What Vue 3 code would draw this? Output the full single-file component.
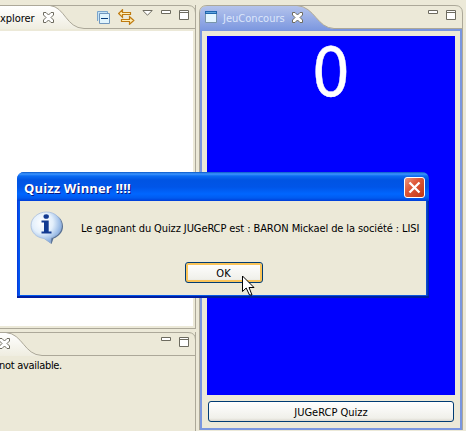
<script setup>
const message = 'Le gagnant du Quizz JUGeRCP est : BARON Mickael de la société : LISI'
</script>

<template>
  <div class="workbench">
    <div class="column left">
      <section class="view explorer">
        <header class="head">
          <svg class="shape" width="196" height="24" viewBox="0 0 196 24">
            <defs>
              <linearGradient id="tabLight" x1="0" y1="0" x2="0" y2="1">
                <stop offset="0" stop-color="#fff" />
                <stop offset="1" stop-color="#efede0" />
              </linearGradient>
            </defs>
            <path d="M0 1H50C65 2 66 23 84 23.5V24H0Z" fill="url(#tabLight)" />
            <path d="M0 .5H188Q195.5 .5 195.5 8V24" class="line" />
            <path d="M50 .5C65 2 66 23 84 23.5H195" class="line" />
          </svg>
          <div class="bar">
            <span class="label explorer-label">xplorer</span>
            <svg class="x-icon" width="11" height="11" viewBox="0 0 11 11"><path d="M.5 .5h2.5l2.5 2.5 2.5-2.5h2.5v2.5l-2.5 2.5 2.5 2.5v2.5h-2.5l-2.5-2.5-2.5 2.5h-2.5v-2.5l2.5-2.5-2.5-2.5z" fill="#fff" stroke="#6d6b5f" /></svg>
            <svg class="collapse" width="13" height="13" viewBox="0 0 13 13"><path d="M.5 10V.5H10.5V2" fill="#c4e3f6" stroke="#7aa5cc" /><path d="M2.5 2.5h10v10h-10z" fill="#e0f4fd" stroke="#7096bd" /><path d="M4 7h7v1h-7z" fill="#083d7c" /></svg>
            <svg class="arrows" width="17" height="16" viewBox="0 0 17 16"><path d="M.7 4.500 4.500 .7V3.500H12.500V5.500H4.500V8.300zM15.800 11.500 11.500 7.700V10.500H3.500V12.500H11.500V15.300z" fill="#ffefb8" stroke="#c07b10" stroke-width="1.200" /></svg>
            <svg class="tri" width="11" height="6" viewBox="0 0 11 6"><path d="M.8 .5h9.400L5.500 5.200z" fill="#fff" stroke="#6d6b5f" /></svg>
            <svg class="min" width="10" height="4" viewBox="0 0 10 4"><path d="M.5 .5h9v3h-9z" fill="#fff" stroke="#6d6b5f" /></svg>
            <svg class="max" width="10" height="10" viewBox="0 0 10 10"><path d="M.5 .5h9v9h-9zM.5 2.500h9" fill="#fff" stroke="#6d6b5f" /></svg>
          </div>
        </header>
        <div class="tree"></div>
      </section>

      <section class="view outline">
        <header class="head">
          <svg class="shape" width="196" height="24" viewBox="0 0 196 24">
            <path d="M0 1H6C23 2 24 23 42 23.500V24H0Z" fill="url(#tabLight)" />
            <path d="M0 .5H188Q195.500 .5 195.500 8V24" class="line" />
            <path d="M6 .5C23 2 24 23 42 23.500H195" class="line" />
          </svg>
          <div class="bar">
            <svg class="x-icon low" width="11" height="11" viewBox="0 0 11 11"><path d="M.5 .5h2.500l2.500 2.500 2.500-2.500h2.500v2.500l-2.500 2.500 2.500 2.500v2.500h-2.500l-2.500-2.500-2.500 2.500h-2.500v-2.500l2.500-2.500-2.500-2.500z" fill="#fff" stroke="#6d6b5f" /></svg>
            <svg class="min" width="10" height="4" viewBox="0 0 10 4"><path d="M.5 .5h9v3h-9z" fill="#fff" stroke="#6d6b5f" /></svg>
            <svg class="max" width="10" height="10" viewBox="0 0 10 10"><path d="M.5 .5h9v9h-9zM.5 2.500h9" fill="#fff" stroke="#6d6b5f" /></svg>
          </div>
        </header>
        <p class="label unavailable">not available.</p>
      </section>
    </div>

    <section class="contest">
      <header class="head">
        <svg class="shape" width="264" height="26" viewBox="0 0 264 26">
          <defs>
            <linearGradient id="tabBlue" x1="0" y1="0" x2="0" y2="1">
              <stop offset="0" stop-color="#b4c3ec" />
              <stop offset="1" stop-color="#7a96df" />
            </linearGradient>
          </defs>
          <path d="M1 26V8Q1 1 8 1H98C116 2 118 23 135 23.500V26Z" fill="url(#tabBlue)" />
          <path d="M134 24H263V26H134Z" fill="#7a96df" />
          <path d="M.5 26V8Q.5 .5 8 .5H256Q263.500 .5 263.500 8V26" class="line" />
          <path d="M98 .5C116 2 118 23 135 23.500H263" class="line" />
        </svg>
        <div class="bar">
          <svg class="window" width="12" height="12" viewBox="0 0 12 12"><path d="M.5 .5h11v11H.5z" fill="#e4f6ff" stroke="#7895aa" /><path d="M0 0h12v3H0z" fill="#1f67ae" /><path d="M1 1h10v1H1z" fill="#61a5dc" /></svg>
          <span class="label contest-label">JeuConcours</span>
          <svg class="x-icon bright" width="11" height="11" viewBox="0 0 11 11"><path d="M.5 .5h2.500l2.500 2.500 2.500-2.500h2.500v2.500l-2.500 2.500 2.500 2.500v2.500h-2.500l-2.500-2.500-2.500 2.500h-2.500v-2.500l2.500-2.500-2.500-2.500z" fill="#fff" stroke="#6d6b5f" /></svg>
          <svg class="min" width="10" height="4" viewBox="0 0 10 4"><path d="M.5 .5h9v3h-9z" fill="#fff" stroke="#6d6b5f" /></svg>
          <svg class="max" width="10" height="10" viewBox="0 0 10 10"><path d="M.5 .5h9v9h-9zM.5 2.500h9" fill="#fff" stroke="#6d6b5f" /></svg>
        </div>
      </header>
      <div class="contest-frame">
        <div class="contest-body">
          <div class="score"><span>0</span></div>
          <button class="xp-button quiz"><span class="label quiz-label">JUGeRCP Quizz</span></button>
        </div>
      </div>
    </section>

    <div class="dialog">
      <div class="title">
        <span class="title-text">Quizz Winner !!!!</span>
        <button class="close">
          <svg width="21" height="21" viewBox="0 0 21 21">
            <defs>
              <linearGradient id="red" x1="0" y1="0" x2="1" y2="1">
                <stop offset="0" stop-color="#eb9a83" />
                <stop offset=".4" stop-color="#df593a" />
                <stop offset="1" stop-color="#bd3512" />
              </linearGradient>
            </defs>
            <rect x=".5" y=".5" width="20" height="20" rx="2.500" fill="url(#red)" stroke="#fff" />
            <path d="M5.500 5.500l10 10M15.500 5.500l-10 10" stroke="#fff" stroke-width="2.300" />
          </svg>
        </button>
      </div>
      <div class="dialog-body">
        <div class="message">
          <svg width="34" height="34" viewBox="0 0 34 34">
            <defs>
              <radialGradient id="bubble" cx=".38" cy=".35" r=".68">
                <stop offset="0" stop-color="#fff" />
                <stop offset=".5" stop-color="#e3effb" />
                <stop offset="1" stop-color="#7ba5dd" />
              </radialGradient>
            </defs>
            <path d="M18 2.500C27 2.500 33 8 33 15.500 33 21 29 25.500 23.500 27.500L21.500 33 15 28Z" fill="#3c5a88" opacity=".85" />
            <path d="M16.500 1C25 1 31.500 7 31.500 14.500 31.500 21 27 25 21 27L20.500 32 14 27.500C6 26.500 1 21 1 14.500 1 7 8 1 16.500 1Z" fill="url(#bubble)" stroke="#a0b8da" stroke-width=".7" />
            <ellipse cx="16.200" cy="5.500" rx="2.700" ry="2.300" fill="#123a91" />
            <path d="M11.500 9.500h7.200V20.500h2.800v2H11.500v-2H14v-9h-2.500z" fill="#123a91" />
          </svg>
          <span class="label message-label">{{ message }}</span>
        </div>
        <button class="xp-button ok"><span class="label ok-label">OK</span></button>
      </div>
      <svg class="cursor" width="13" height="21" viewBox="0 0 13 21"><path d="M.5 1v15.500L4.200 13l3.300 7h2.500l-3-7.500h5z" fill="#fff" stroke="#000" /></svg>
    </div>
  </div>
</template>

<style>
body { margin: 0; overflow: hidden; }
</style>

<style scoped>
* { box-sizing: border-box; }
svg { display: block; flex: none; }
button { padding: 0; margin: 0; border: 0; background: none; }
.workbench {
  position: relative;
  display: flex;
  gap: 3px;
  width: 466px;
  height: 431px;
  padding-top: 5px;
  overflow: hidden;
  background: #ece9d8;
  color: #000;
  font-family: "DejaVu Sans Condensed", "DejaVu Sans", sans-serif;
  font-stretch: condensed;
  font-size: 11px;
}
.label { display: block; padding-top: 1px; line-height: 14px; white-space: nowrap; }
.line { fill: none; stroke: #aca899; }
.column { display: flex; flex-direction: column; gap: 3px; width: 196px; }
.view { border-right: 1px solid #aca899; }
.explorer { display: flex; flex-direction: column; height: 324px; border-bottom: 1px solid #aca899; }
.outline { flex: 1; }
.head { display: grid; height: 24px; }
.shape, .bar { grid-area: 1 / 1; }
.bar { display: flex; align-items: flex-start; width: 196px; padding-right: 7px; }
.contest .bar { width: 264px; padding: 0 7px 0 6px; }
.explorer-label { width: 43px; margin-top: 6px; letter-spacing: -.05px; }
.x-icon { margin-top: 7px; }
.low { margin-left: -1px; margin-top: 6px; }
.collapse { margin: 6px 0 0 43px; }
.arrows { margin: 4px 0 0 8px; }
.tri { margin: 5px 0 0 7px; }
.min { margin: 5px 8px 0 auto; }
.max { margin-top: 5px; }
.tree { flex: 1; margin: 2px 2px 2px 0; background: #fff; }
.unavailable { margin: 2px 0 0 -1px; letter-spacing: -.3px; }
.contest { display: flex; flex-direction: column; width: 264px; height: 425px; }
.contest .head { height: 26px; }
.window { margin-top: 6px; }
.contest-label { width: 70px; margin: 6px 0 0 6px; color: #dce6fa; letter-spacing: .02px; }
.bright { margin: 7px 0 0 -1px; }
.contest-frame {
  display: flex;
  flex: 1;
  border: solid #aca899;
  border-width: 0 1px;
}
.contest-body {
  display: flex;
  flex-direction: column;
  gap: 6px;
  flex: 1;
  padding: 5px 5px 6px;
  border: solid #7a96df;
  border-width: 0 2px 2px;
}
.score { display: flex; justify-content: center; height: 359px; background: #00f; color: #fff; }
.score span { font: 67px/75px "DejaVu Sans Condensed", "DejaVu Sans", sans-serif; font-stretch: condensed; -webkit-text-stroke: .4px #fff; }
.xp-button {
  display: flex;
  align-items: center;
  justify-content: center;
  height: 21px;
  border: 1px solid #003c74;
  border-radius: 3px;
  background: linear-gradient(#fff, #f0f0ea 85%, #dcd8ce);
  font: inherit;
  color: #000;
}
.quiz { margin: 0 1px; }
.dialog {
  position: absolute;
  left: 17px;
  top: 172px;
  width: 412px;
  height: 126px;
  padding: 0 3px 3px;
  border-radius: 7px 7px 0 0;
  background: linear-gradient(transparent 124px, #001ea0 124px), linear-gradient(90deg, #0831d9, #0058ee 2px, #0855dd 409px, #001ea0);
}
.title {
  display: flex;
  justify-content: space-between;
  height: 29px;
  margin: 0 -3px;
  padding: 5px 4px 0 7px;
  border-radius: 7px 7px 0 0;
  background: linear-gradient(#0858c8 0, #3d95ff 2px, #0b6cf2 4px, #0054e3 8px, #0055e8 15px, #0066ff 22px, #005bf0 26px, #003dd7);
}
.title-text { color: #fff; font: bold 13px/23px "Open Sans", "Noto Sans", sans-serif; letter-spacing: .15px; text-shadow: 1px 1px #0a1883; white-space: nowrap; }
.close { width: 21px; height: 21px; }
.dialog-body { display: flex; flex-direction: column; gap: 17px; height: 94px; padding-top: 10px; background: #ece9d8; }
.message { display: flex; align-items: center; gap: 17px; height: 34px; padding-left: 10px; }
.message-label { padding-top: 2px; letter-spacing: -.1px; }
.ok { width: 78px; margin-left: 165px; box-shadow: inset 0 0 0 2px #f9c45a, inset 0 -2px #e59700; }
.ok-label { padding: 2px 1px 0 0; }
.quiz-label { padding-top: 2px; }
.cursor { position: absolute; left: 225px; top: 103px; }
</style>
